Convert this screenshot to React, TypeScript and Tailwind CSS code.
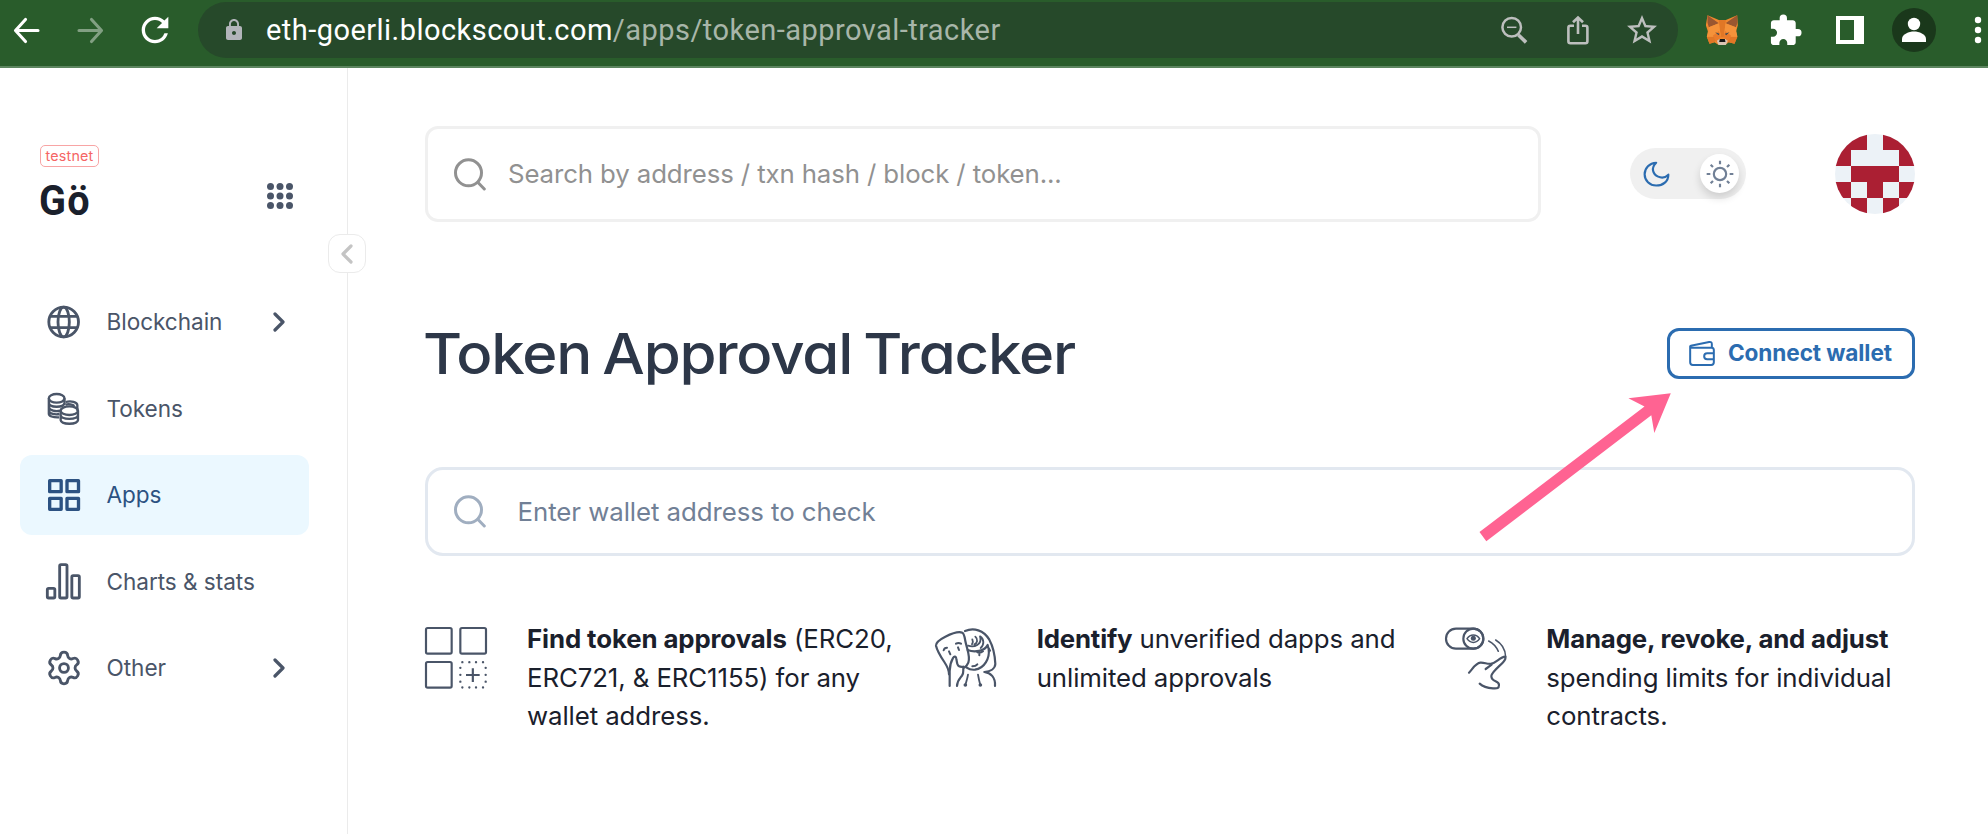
import React from "react";
import { MdExtension, MdLock, MdRefresh, MdStarBorder } from "react-icons/md";

type SvgProps = { className?: string };

function BackIcon({ className = "" }: SvgProps) {
  return (
    <svg viewBox="0 0 27 27" fill="none" stroke="currentColor" strokeWidth="3.1" strokeLinecap="round" className={className}>
      <path d="M25 13.5H2.5M12.5 2.5l-10 11 10 11" strokeLinejoin="round" />
    </svg>
  );
}

function ZoomOutIcon() {
  return (
    <svg viewBox="0 0 27 28" fill="none" stroke="#bdbfbe" className="h-7 w-[27px]">
      <circle cx="10.7" cy="11.3" r="9.3" strokeWidth="2.5" />
      <path d="M6 11.3h9.4" strokeWidth="1.5" />
      <path d="M17.5 19l7.6 7.4" strokeWidth="3.6" />
    </svg>
  );
}

function ShareIcon() {
  return (
    <svg viewBox="0 0 22 30" fill="none" stroke="#bdbfbe" strokeWidth="2.6" className="h-[30px] w-[22px]">
      <path d="M7 10.700H3.400a2 2 0 0 0-2 2v13.500a2 2 0 0 0 2 2h15a2 2 0 0 0 2-2V12.700a2 2 0 0 0-2-2H15M11 19V3M6 7.300l5-4.800 5 4.800" />
    </svg>
  );
}

function FoxIcon() {
  return (
    <svg viewBox="730 42 98 96" className="h-8 w-[33px]">
      <path fill="#f0882f" d="M734 46l34 14h21l34-14 2 30-5 18 3 16-8 21-17-4-10 7h-22l-11-7-15 4-8-21 3-16-6-18z" />
      <path fill="#9a5630" d="M734 46l34 24-30 12-4-14zM823 46l-35 24 31 12 5-14z" />
      <path fill="#e17726" d="M768 60l21 0-6 52h-9zM732 110l34 0-11 17-15 4zM824 110h-35l9 17 17 4z" />
      <path fill="#f5923a" d="M738 82l30-12 6 40-42 0 5-16zM819 82l-31-12-5 40 41 0-4-16z" />
      <path fill="#ea7b2b" d="M750 107l18-14 6 17-13 17zM805 107l-18-14-5 17 14 17z" />
      <path fill="#384b58" d="M757 97l13 4-3 5zM800 97l-14 4 4 5z" />
      <path fill="#d9c4b4" d="M762 122l8-5h17l8 5-6 13h-22z" />
      <path fill="#161616" d="M771 117h15l2 9h-19z" />
    </svg>
  );
}

function GlobeIcon() {
  return (
    <svg viewBox="132 545 120 120" fill="none" stroke="currentColor" strokeWidth="8.500" className="size-10">
      <circle cx="191" cy="605" r="44.500" />
      <ellipse cx="191" cy="605" rx="17" ry="44.500" />
      <path d="M150 588h82M150 622h82" />
    </svg>
  );
}

function CoinsIcon() {
  return (
    <svg viewBox="132 27 120 120" fill="none" stroke="currentColor" strokeWidth="7" className="size-10">
      <ellipse cx="170" cy="55" rx="23.500" ry="13" />
      <path d="M146.500 55v46c0 7 12 12 31 11M146.500 69c2 15 45 15 47 0M146.500 81c2 11 21 15 34 11M146.500 92c2 10 20 13 32 10M193.500 55v20" />
      <path d="M197 66c16-5 35 0 35 10v16M197 74c8-3 22-1 26 4" />
      <ellipse cx="208" cy="92" rx="26" ry="13" />
      <path d="M182 92v28c2 15 50 15 52 0V92M182 106c3 14 49 14 52 0" />
    </svg>
  );
}

function AppsIcon() {
  return (
    <svg viewBox="132 285 120 120" fill="none" stroke="currentColor" strokeWidth="10" strokeLinejoin="round" className="size-10">
      <path d="M149 302h34.500v33H149zM201 302h34.500v33H201zM149 355h34.500v33H149zM201 355h34.500v33H201z" />
    </svg>
  );
}

function ChartsIcon() {
  return (
    <svg viewBox="132 545 120 120" fill="none" stroke="currentColor" strokeWidth="8.500" className="size-10">
      <rect x="142" y="624" width="22.500" height="29" rx="4" />
      <rect x="179" y="553" width="22" height="100" rx="4" />
      <rect x="215.500" y="586" width="22.500" height="67" rx="4" />
    </svg>
  );
}

function GearIcon() {
  return (
    <svg viewBox="0 0 24 24" fill="none" stroke="currentColor" strokeWidth="1.800" className="size-[38px]">
      <path d="M9.671 4.136a2.34 2.34 0 0 1 4.659 0 2.34 2.34 0 0 0 3.319 1.915 2.34 2.34 0 0 1 2.33 4.033 2.34 2.34 0 0 0 0 3.831 2.34 2.34 0 0 1-2.33 4.033 2.34 2.34 0 0 0-3.319 1.915 2.34 2.34 0 0 1-4.659 0 2.34 2.34 0 0 0-3.32-1.915 2.34 2.34 0 0 1-2.33-4.033 2.34 2.34 0 0 0 0-3.831A2.34 2.34 0 0 1 6.35 6.051a2.34 2.34 0 0 0 3.319-1.915" />
      <circle cx="12" cy="12" r="2.800" />
    </svg>
  );
}

function Chevron({ className = "" }: SvgProps) {
  return (
    <svg viewBox="0 0 12 20" fill="none" stroke="currentColor" strokeWidth="3.200" strokeLinecap="round" strokeLinejoin="round" className={className}>
      <path d="M2 2l8 8-8 8" />
    </svg>
  );
}

function SearchIcon({ className = "" }: SvgProps) {
  return (
    <svg viewBox="0 0 32 33" fill="none" stroke="currentColor" strokeWidth="3" strokeLinecap="round" className={className}>
      <circle cx="14.500" cy="14.800" r="13" />
      <path d="M24 24.500l6.300 6.500" />
    </svg>
  );
}

function MoonIcon() {
  return (
    <svg viewBox="424 148 88 84" fill="none" stroke="#2b6cb0" strokeWidth="6.500" strokeLinejoin="round" className="h-7 w-[29px]">
      <path d="M467 156c-20 1-35 16-35 35 0 19 15 34 35 34 21 0 37-13 37-33-8 8-20 11-31 6-16-7-23-26-6-42z" />
    </svg>
  );
}

function SunIcon() {
  return (
    <svg viewBox="618 150 84 84" fill="none" stroke="#718096" strokeWidth="6.500" className="size-7">
      <circle cx="660" cy="192" r="18.500" />
      <path d="M660 152v11M660 221v11M620 192h11M689 192h11M632 164l7 7M681 213l7 7M688 164l-7 7M639 213l-7 7" />
    </svg>
  );
}

function WalletIcon() {
  return (
    <svg viewBox="677 87 83 81" fill="none" stroke="#2b6cb0" strokeWidth="6" strokeLinejoin="round" className="h-[27px] w-7">
      <path d="M683 107l2-3 55-11c5-1 8 1 8 6v11M683 106v48c0 5 3 8 8 8h55c5 0 8-3 8-8v-37c0-4-3-7-7-7h-60c-3 0-4-1-4-4z" />
      <path d="M754 127h-20c-12 0-12 18 0 18h20" />
    </svg>
  );
}

function BlocksIcon() {
  return (
    <svg viewBox="42 528 192 192" fill="none" stroke="#4a5568" strokeWidth="6.500" className="size-16">
      <rect x="48" y="534" width="77" height="77" rx="5" />
      <rect x="151" y="534" width="77" height="77" rx="5" />
      <rect x="48" y="636" width="77" height="77" rx="5" />
      <path d="M168 675h41M188.500 655v41" />
      <path
        d="M157 636.500h.1M178 636.500h.1M198 636.500h.1M219 636.500h.1M157 712.500h.1M178 712.500h.1M198 712.500h.1M219 712.500h.1M151 653.500h.1M151 674.500h.1M151 695h.1M227 653.500h.1M227 674.500h.1M227 695h.1"
        strokeWidth="7"
        strokeLinecap="round"
      />
    </svg>
  );
}

function MaskIcon() {
  return (
    <svg viewBox="41 45 192 192" fill="none" stroke="#4a5568" strokeWidth="6.600" strokeLinecap="round" strokeLinejoin="round" className="size-16">
      <path d="M88 225v-45c0-12 5-30 10-39 4-7 9-5 10 2 2 9 1 18 7 22 5 3 9 4 14 2" />
      <path d="M86 190c0-14-4-22-14-37-12-18-22-36-25-49-1-10 12-19 28-27 20-10 42-16 51-12 6 4 7 14 9 25 4 22 16 45 9 65-3 8-9 14-15 17-1 8 2 13-4 22-7 9-14 14-15 31" />
      <path d="M134 60c26-11 56-3 73 26 12 22 17 50 18 73-1 14-15 23-33 24 18 2 34 15 32 42" />
      <path d="M205 114c4 28-13 58-41 62-10 1-18-1-25-6" />
      <path d="M142 117c20 8 51 4 60-15 0 6 3 12 7 17" />
      <path d="M143 104c18 6 44-2 36-28 13 9 13 25 2 35M165 77c9 8 6 20-3 23M156 85c3 6 2 10-1 15" strokeWidth="5.500" />
      <path d="M70 118c1-5 5-8 10-8M107 98c5-3 10-3 15 0M86 121l4 9M113 109l3 8M171 124c6 2 12 1 17-3M177 124v9M156 166c7 0 12-2 15-6" strokeWidth="6" />
      <path d="M143 191c-2 13-5 20-8 31M173 191c2 12 4 21 7 31" strokeWidth="5.500" />
      <path d="M135 222h.1M180 222h.1" strokeWidth="11" />
    </svg>
  );
}

function RevokeIcon() {
  return (
    <svg viewBox="72 76 192 192" fill="none" stroke="#4a5568" strokeWidth="6.500" strokeLinecap="round" strokeLinejoin="round" className="ml-px size-16">
      <rect x="78" y="84" width="112" height="60" rx="30" />
      <circle cx="160" cy="114" r="30" />
      <path d="M141 114c10-15 28-15 38 0-10 15-28 15-38 0z" strokeWidth="4.500" />
      <circle cx="160" cy="113" r="7.500" fill="#4a5568" stroke="none" />
      <path d="M206 121c12 6 22 15 29 31M227 118c17 10 29 29 30 50" strokeWidth="4.500" />
      <path d="M147 216c10-10 20-29 34-30 13-1 20 5 33 3 15-3 26-20 42-21 2 7 0 10-6 16-10 11-35 30-36 42 0 19 23 13 23 27 0 12-8 10-18 10-14-1-28-3-40-14M197 205l18-13" />
    </svg>
  );
}

const identicon = ["11011", "10001", "01110", "10101", "01010"];

const navItems = [
  { label: "Blockchain", icon: <GlobeIcon />, expandable: true, active: false },
  { label: "Tokens", icon: <CoinsIcon />, expandable: false, active: false },
  { label: "Apps", icon: <AppsIcon />, expandable: false, active: true },
  { label: "Charts & stats", icon: <ChartsIcon />, expandable: false, active: false },
  { label: "Other", icon: <GearIcon />, expandable: true, active: false },
];

function BrowserBar() {
  return (
    <div className="flex h-[68px] shrink-0 items-start border-b-2 border-[#5c855f] bg-[#295c2b] text-white">
      <div className="flex h-[60px] w-[198px] shrink-0 items-center pl-[13px]">
        <BackIcon className="size-[27px]" />
        <BackIcon className="ml-[37px] size-[27px] rotate-180 text-[#82a083]" />
        <MdRefresh className="ml-[31px] size-[40px]" />
      </div>
      <div className="mt-0.5 flex h-14 w-[1480px] shrink-0 items-center rounded-full bg-[#26492a] pl-6">
        <MdLock className="size-6 text-[#b2b5ba]" />
        <div className="ml-5 w-[1235px] whitespace-nowrap pt-0.5 font-[Roboto] text-[29px] tracking-[0.46px] text-[#a8b6a9]">
          <span className="text-white">eth-goerli.blockscout.com</span>/apps/token-approval-tracker
        </div>
        <ZoomOutIcon />
        <div className="ml-[39px]">
          <ShareIcon />
        </div>
        <MdStarBorder className="ml-[35px] size-[36px] text-[#bdbfbe]" />
      </div>
      <div className="flex h-[60px] items-center pl-7">
        <FoxIcon />
        <MdExtension className="ml-[29px] mr-0.5 size-[35px]" />
        <svg viewBox="0 0 28 28" className="ml-[31px] size-7">
          <path fill="currentColor" fillRule="evenodd" d="M0 0h28v28H0zM4 4v20h14V4z" />
        </svg>
        <svg viewBox="0 0 44 44" className="ml-7 size-11">
          <circle cx="22" cy="22" r="22" fill="#1a381b" />
          <circle cx="22" cy="16" r="6.200" fill="#fff" />
          <path fill="#fff" d="M10 34v-3c0-5 7-7.500 12-7.500S34 26 34 31v3z" />
        </svg>
        <svg viewBox="0 0 8 28" fill="currentColor" className="ml-[38px] h-7 w-2">
          <circle cx="4" cy="4" r="3.200" />
          <circle cx="4" cy="14" r="3.200" />
          <circle cx="4" cy="24" r="3.200" />
        </svg>
      </div>
    </div>
  );
}

function Sidebar() {
  return (
    <aside className="relative w-[348px] shrink-0 border-r border-[#ebebeb]">
      <div className="flex h-[214px] items-start justify-between pl-10 pr-[54px] pt-[77px]">
        <div>
          <div className="flex h-[22px] w-[59px] items-center justify-center rounded-[5px] border border-[#f8a5a5] text-[14.300px] tracking-[0.2px] text-[#f56565]">
            testnet
          </div>
          <div className="-ml-px mt-[11px] origin-left scale-x-[0.92] font-[Roboto] text-[43px] font-bold leading-[44px] tracking-[1.500px] text-[#1a202c]">
            Gö
          </div>
        </div>
        <svg viewBox="0 0 26 26" fill="#4a5568" className="mt-[38px] size-[26px]">
          {[3.500, 13, 22.500].map((y) => [3.500, 13, 22.500].map((x) => <circle key={`${x}-${y}`} cx={x} cy={y} r="3.500" />))}
        </svg>
      </div>
      <nav className="flex flex-col gap-[6.500px] pl-5 pr-[38px]">
        {navItems.map((item) => (
          <a
            key={item.label}
            className={`flex h-20 items-center rounded-[12px] pl-6 pr-6 ${item.active ? "bg-[#ebf8ff] text-[#2c5282]" : "text-[#4a5568]"}`}
          >
            <span className="flex w-10 justify-center">{item.icon}</span>
            <span className="ml-[22.500px] flex-1 whitespace-nowrap text-[22.600px] tracking-[-0.050px]">{item.label}</span>
            {item.expandable && <Chevron className="h-5 w-3" />}
          </a>
        ))}
      </nav>
      <button className="absolute left-[328px] top-[166px] flex h-[39px] w-[38px] items-center justify-center rounded-[12px] border border-[#ebebeb] bg-white text-[#c4c4c4]">
        <Chevron className="h-5 w-3 rotate-180" />
      </button>
    </aside>
  );
}

function Header() {
  return (
    <header className="flex h-24 items-center">
      <div className="flex h-24 w-[1116px] items-center rounded-[13px] border-[3px] border-[#f0f0f0] pl-[26px] text-[#919191]">
        <SearchIcon className="h-[33px] w-8" />
        <span className="ml-[22px] whitespace-nowrap text-[25.800px] tracking-[-0.110px]">
          Search by address / txn hash / block / token...
        </span>
      </div>
      <div className="mb-px ml-[89px] flex h-[51px] w-[116px] items-center justify-between rounded-full bg-[#f0f0f0] pl-3 pr-[7px]">
        <MoonIcon />
        <div className="flex size-[39px] items-center justify-center rounded-full bg-white shadow-[0_5px_8px_rgba(0,0,0,0.14)]">
          <SunIcon />
        </div>
      </div>
      <div className="ml-[89px] grid size-20 grid-cols-5 overflow-hidden rounded-full bg-[#ecf2f7]">
        {identicon
          .join("")
          .split("")
          .map((cell, i) => (
            <div key={i} className={cell === "1" ? "bg-[#ab1f33]" : ""} />
          ))}
      </div>
    </header>
  );
}

function Feature({ icon, children }: { icon: React.ReactNode; children: React.ReactNode }) {
  return (
    <div className="flex items-start">
      <div className="-ml-px mt-[6px] w-16 shrink-0">{icon}</div>
      <p className="ml-[39px] whitespace-nowrap text-[25.800px] leading-[38.700px] tracking-[-0.090px] text-[#1a202c]">{children}</p>
    </div>
  );
}

export default function App() {
  return (
    <div className="flex h-[834px] w-[1988px] flex-col overflow-hidden bg-white font-[Inter,sans-serif]">
      <BrowserBar />
      <div className="flex flex-1">
        <Sidebar />
        <main className="relative w-[1640px] pl-[77px] pr-[73px] pt-[58px]">
          <Header />
          <div className="mt-[96px] flex h-[70px] items-center justify-between">
            <h1 className="-ml-0.5 origin-left scale-x-[1.07] whitespace-nowrap pt-0.5 text-[56px] font-medium tracking-[-1.080px] text-[#2d3748] [font-feature-settings:'cv11'] [word-spacing:-3.500px]">
              Token Approval Tracker
            </h1>
            <button className="flex h-[51px] w-[248px] items-center rounded-[12px] border-[3px] border-[#2b6cb0] pl-[18px] text-[#2b6cb0]">
              <WalletIcon />
              <span className="ml-3 whitespace-nowrap text-[22.600px] font-bold tracking-[-0.100px]">Connect wallet</span>
            </button>
          </div>
          <div className="mt-[79px] flex h-[89px] items-center rounded-[18px] border-[3px] border-[#e2e8f0] pl-[26px]">
            <SearchIcon className="h-[33px] w-8 text-[#a0aec0]" />
            <span className="ml-[31.500px] whitespace-nowrap pt-0.5 text-[25.800px] tracking-[-0.050px] text-[#718096]">Enter wallet address to check</span>
          </div>
          <div className="mt-[64px] grid grid-cols-3 gap-[39px]">
            <Feature icon={<BlocksIcon />}>
              <b className="tracking-[-0.100px]">Find token approvals</b> (ERC20,
              <br />
              ERC721, &amp; ERC1155) for any
              <br />
              wallet address.
            </Feature>
            <Feature icon={<MaskIcon />}>
              <b className="tracking-[-0.180px]">Identify</b> unverified dapps and
              <br />
              unlimited approvals
            </Feature>
            <Feature icon={<RevokeIcon />}>
              <b className="tracking-[-0.180px]">Manage, revoke, and adjust</b>
              <br />
              spending limits for individual
              <br />
              contracts.
            </Feature>
          </div>
          <svg viewBox="0 0 192 149" fill="#ff6392" className="pointer-events-none absolute left-[1131px] top-[325px] h-[149px] w-48">
            <path d="M191.800.3l-42.400 5 16.100 8.200L.5 139l6.800 9.300 165-126 3 17.700z" />
          </svg>
        </main>
      </div>
    </div>
  );
}
